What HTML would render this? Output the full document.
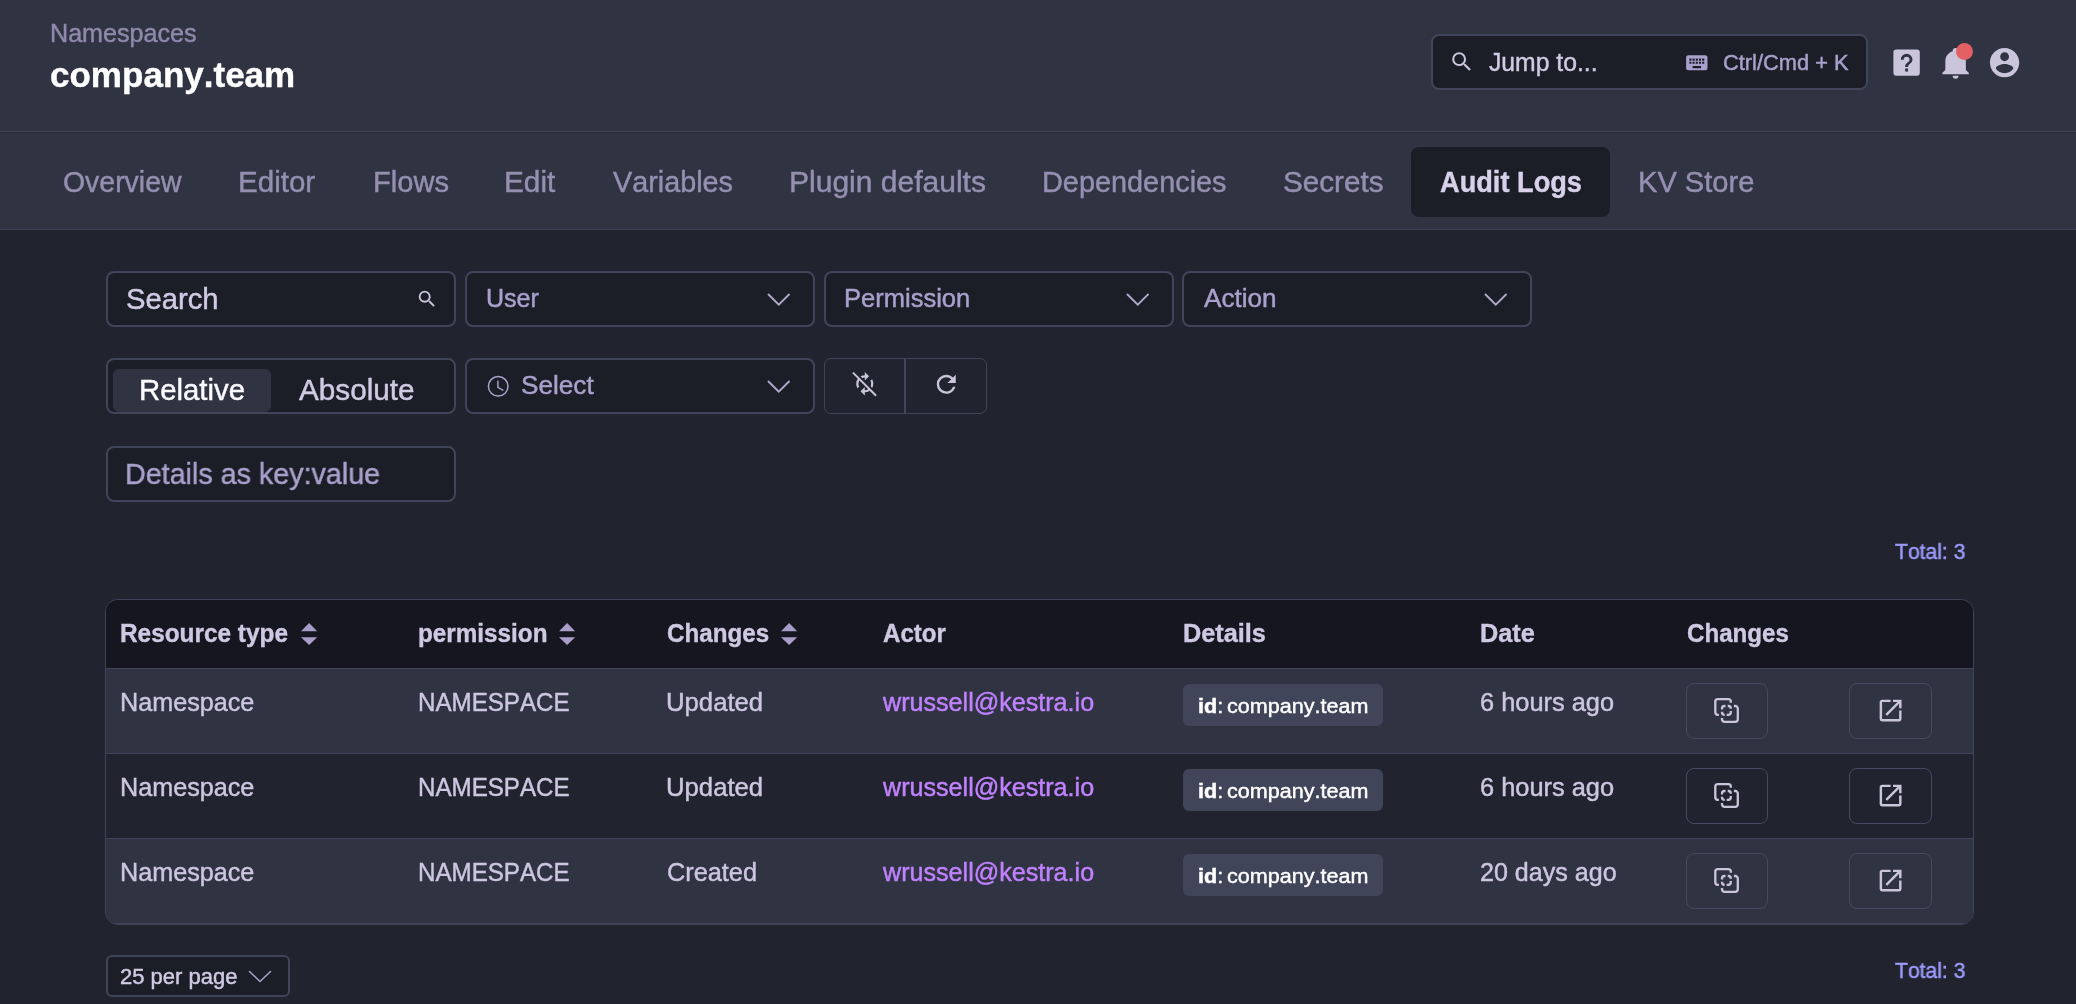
<!DOCTYPE html>
<html lang="en">
<head>
<meta charset="utf-8">
<title>Namespaces - company.team - Audit Logs</title>
<style>
html,body{margin:0;padding:0}
body{width:2076px;height:1004px;overflow:hidden;background:#21242e;position:relative;
font-family:"Liberation Sans",sans-serif;font-kerning:none;-webkit-font-smoothing:antialiased}
#app{position:absolute;left:0;top:0;width:2076px;height:1004px;will-change:transform}
header,nav,section,main,footer{display:block;position:static}
body *{box-sizing:content-box}
#app div,span,a,h1,kbd,svg{position:absolute;margin:0;padding:0;line-height:1;white-space:pre;font-weight:400;font-family:inherit;text-decoration:none;transform-origin:0 0;-webkit-text-stroke-color:currentColor}
b{font-weight:700}
svg{overflow:visible;display:block}
</style>
</head>
<body>
<div id="app">
<header>
<div style="left:0px;top:0px;width:2076px;height:131px;background:#2f3342;"></div>
<div class="crumb" style="left:49.74px;top:21.00px;font-size:25.5px;color:#8f89ac;transform:scaleX(0.9849);-webkit-text-stroke-width:0.45px;">Namespaces</div>
<h1 style="left:50.03px;top:58.00px;font-size:34.5px;color:#ffffff;transform:scaleX(1.0151);-webkit-text-stroke-width:0.4px;font-weight:700;">company.team</h1>
<div class="jump" style="left:1431px;top:34px;width:433px;height:52px;background:#1c1e27;border:2px solid #404559;border-radius:8px;"></div>
<svg style="left:1449.4px;top:49.4px;" width="25.6" height="25.6" viewBox="0 0 24 24"><path fill="#cac5da" d="M9.5,3A6.5,6.5 0 0,1 16,9.5C16,11.11 15.41,12.59 14.44,13.73L14.71,14H15.5L20.5,19L19,20.5L14,15.5V14.71L13.73,14.44C12.59,15.41 11.11,16 9.5,16A6.5,6.5 0 0,1 3,9.5A6.5,6.5 0 0,1 9.5,3M9.5,5C7,5 5,7 5,9.5C5,12 7,14 9.5,14C12,14 14,12 14,9.5C14,7 12,5 9.5,5Z"/></svg>
<span style="left:1488.51px;top:49.00px;font-size:26px;color:#d1cae4;transform:scaleX(0.9508);-webkit-text-stroke-width:0.45px;">Jump to...</span>
<svg style="left:1683.9px;top:49.6px;" width="25.6" height="25.6" viewBox="0 0 24 24"><path fill="#a9a0cc" d="M19,10H17V8H19M19,13H17V11H19M16,10H14V8H16M16,13H14V11H16M16,17H8V15H16M7,10H5V8H7M7,13H5V11H7M8,11H10V13H8M8,8H10V10H8M11,11H13V13H11M11,8H13V10H11M20,5H4C2.89,5 2,5.89 2,7V17A2,2 0 0,0 4,19H20A2,2 0 0,0 22,17V7C22,5.89 21.1,5 20,5Z"/></svg>
<kbd style="left:1722.79px;top:52.00px;font-size:22px;color:#a9a0cc;transform:scaleX(0.9924);-webkit-text-stroke-width:0.45px;">Ctrl/Cmd + K</kbd>
<svg style="left:1888.8px;top:44.85px;" width="35.2" height="35.2" viewBox="0 0 24 24"><path fill="#cac5da" d="M11,18H13V16H11V18M12,6A4,4 0 0,0 8,10H10A2,2 0 0,1 12,8A2,2 0 0,1 14,10C14,12 11,11.75 11,15H13C13,12.75 16,12.5 16,10A4,4 0 0,0 12,6M5,3H19A2,2 0 0,1 21,5V19A2,2 0 0,1 19,21H5A2,2 0 0,1 3,19V5A2,2 0 0,1 5,3Z"/></svg>
<svg style="left:1937.8px;top:44.85px;" width="35.2" height="35.2" viewBox="0 0 24 24"><path fill="#cac5da" d="M21,19V20H3V19L5,17V11C5,7.9 7.03,5.17 10,4.29C10,4.19 10,4.1 10,4A2,2 0 0,1 12,2A2,2 0 0,1 14,4C14,4.1 14,4.19 14,4.29C16.97,5.17 19,7.9 19,11V17L21,19M14,21A2,2 0 0,1 12,23A2,2 0 0,1 10,21"/></svg>
<div class="dot" style="left:1956.2px;top:43px;width:17px;height:17px;background:#e36065;border-radius:9px;"></div>
<svg style="left:1986.8px;top:44.85px;" width="35.2" height="35.2" viewBox="0 0 24 24"><path fill="#cac5da" d="M12,19.2C9.5,19.2 7.29,17.92 6,16C6.03,14 10,12.9 12,12.9C14,12.9 17.97,14 18,16C16.71,17.92 14.5,19.2 12,19.2M12,5A3,3 0 0,1 15,8A3,3 0 0,1 12,11A3,3 0 0,1 9,8A3,3 0 0,1 12,5M12,2A10,10 0 0,0 2,12A10,10 0 0,0 12,22A10,10 0 0,0 22,12C22,6.47 17.5,2 12,2Z"/></svg>
</header>
<nav>
<div style="left:0px;top:131px;width:2076px;height:1px;background:#404559;"></div>
<div style="left:0px;top:132px;width:2076px;height:1px;background:#272a37;"></div>
<div style="left:0px;top:133px;width:2076px;height:96px;background:#2f3342;"></div>
<div style="left:0px;top:229px;width:2076px;height:1px;background:#3a3e52;"></div>
<div class="active" style="left:1411px;top:147px;width:199px;height:69.5px;background:#1c1e27;border-radius:8px;"></div>
<a style="left:62.55px;top:167.00px;font-size:30px;color:#958fb1;transform:scaleX(0.9476);-webkit-text-stroke-width:0.45px;">Overview</a>
<a style="left:238.48px;top:167.00px;font-size:30px;color:#958fb1;transform:scaleX(0.9853);-webkit-text-stroke-width:0.45px;">Editor</a>
<a style="left:372.51px;top:167.00px;font-size:30px;color:#958fb1;transform:scaleX(0.9693);-webkit-text-stroke-width:0.45px;">Flows</a>
<a style="left:503.96px;top:167.00px;font-size:30px;color:#958fb1;transform:scaleX(0.9916);-webkit-text-stroke-width:0.45px;">Edit</a>
<a style="left:613.47px;top:167.00px;font-size:30px;color:#958fb1;transform:scaleX(0.9592);-webkit-text-stroke-width:0.45px;">Variables</a>
<a style="left:789.04px;top:167.00px;font-size:30px;color:#958fb1;transform:scaleX(1.0007);-webkit-text-stroke-width:0.45px;">Plugin defaults</a>
<a style="left:1041.83px;top:167.00px;font-size:30px;color:#958fb1;transform:scaleX(0.9620);-webkit-text-stroke-width:0.45px;">Dependencies</a>
<a style="left:1282.55px;top:167.00px;font-size:30px;color:#958fb1;transform:scaleX(0.9883);-webkit-text-stroke-width:0.45px;">Secrets</a>
<a style="left:1637.71px;top:167.00px;font-size:30px;color:#958fb1;transform:scaleX(0.9693);-webkit-text-stroke-width:0.45px;">KV Store</a>
<a style="left:1440.22px;top:167.00px;font-size:30px;color:#d8d1ea;transform:scaleX(0.9065);-webkit-text-stroke-width:0.4px;font-weight:700;">Audit Logs</a>
</nav>
<section>
<div class="inp" style="left:106px;top:271px;width:346px;height:52px;background:#1c1e27;border:2px solid #404559;border-radius:8px;"></div>
<span style="left:125.57px;top:284.00px;font-size:30px;color:#d1cae4;transform:scaleX(0.9745);-webkit-text-stroke-width:0.45px;">Search</span>
<svg style="left:415.7px;top:288px;" width="22" height="22" viewBox="0 0 24 24"><path fill="#cac5da" d="M9.5,3A6.5,6.5 0 0,1 16,9.5C16,11.11 15.41,12.59 14.44,13.73L14.71,14H15.5L20.5,19L19,20.5L14,15.5V14.71L13.73,14.44C12.59,15.41 11.11,16 9.5,16A6.5,6.5 0 0,1 3,9.5A6.5,6.5 0 0,1 9.5,3M9.5,5C7,5 5,7 5,9.5C5,12 7,14 9.5,14C12,14 14,12 14,9.5C14,7 12,5 9.5,5Z"/></svg>
<div class="inp" style="left:465px;top:271px;width:346px;height:52px;background:#1c1e27;border:2px solid #404559;border-radius:8px;"></div>
<div class="inp" style="left:824px;top:271px;width:346px;height:52px;background:#1c1e27;border:2px solid #404559;border-radius:8px;"></div>
<div class="inp" style="left:1182px;top:271px;width:346px;height:52px;background:#1c1e27;border:2px solid #404559;border-radius:8px;"></div>
<span style="left:485.77px;top:285.00px;font-size:26px;color:#a9a0cc;transform:scaleX(0.9627);-webkit-text-stroke-width:0.45px;">User</span>
<span style="left:844.11px;top:285.00px;font-size:26px;color:#a9a0cc;transform:scaleX(0.9818);-webkit-text-stroke-width:0.45px;">Permission</span>
<span style="left:1203.85px;top:285.00px;font-size:26px;color:#a9a0cc;transform:scaleX(1.0039);-webkit-text-stroke-width:0.45px;">Action</span>
<svg style="left:765.8px;top:291.6px" width="25.5" height="15.5" viewBox="-2 -2 25.5 15.5"><path d="M0.5,0.5 L10.75,10.7 L21.0,0.5" fill="none" stroke="#b0a8cc" stroke-width="1.9" stroke-linecap="round" stroke-linejoin="miter"/></svg>
<svg style="left:1124.8px;top:291.6px" width="25.5" height="15.5" viewBox="-2 -2 25.5 15.5"><path d="M0.5,0.5 L10.75,10.7 L21.0,0.5" fill="none" stroke="#b0a8cc" stroke-width="1.9" stroke-linecap="round" stroke-linejoin="miter"/></svg>
<svg style="left:1482.8px;top:291.6px" width="25.5" height="15.5" viewBox="-2 -2 25.5 15.5"><path d="M0.5,0.5 L10.75,10.7 L21.0,0.5" fill="none" stroke="#b0a8cc" stroke-width="1.9" stroke-linecap="round" stroke-linejoin="miter"/></svg>
<div class="inp" style="left:106px;top:358px;width:346px;height:52px;background:#1c1e27;border:2px solid #404559;border-radius:8px;"></div>
<div class="pill" style="left:113px;top:369px;width:158px;height:42.5px;background:#2f3342;border-radius:6px;"></div>
<span style="left:138.69px;top:375.00px;font-size:30px;color:#fbfaff;transform:scaleX(0.9781);-webkit-text-stroke-width:0.45px;">Relative</span>
<span style="left:298.84px;top:375.00px;font-size:30px;color:#d1cae4;transform:scaleX(0.9900);-webkit-text-stroke-width:0.45px;">Absolute</span>
<div class="inp" style="left:465px;top:358px;width:346px;height:52px;background:#1c1e27;border:2px solid #404559;border-radius:8px;"></div>
<svg style="left:486px;top:374px" width="25" height="25" viewBox="486 374 25 25" fill="none" stroke="#a9a0cc" stroke-width="1.5" stroke-linecap="round"><circle cx="498.2" cy="386.3" r="9.8"/><path d="M497.9 381.2V387.4L502.8 390.1"/></svg>
<span style="left:520.71px;top:372.00px;font-size:26px;color:#a9a0cc;transform:scaleX(1.0058);-webkit-text-stroke-width:0.45px;">Select</span>
<svg style="left:765.8px;top:378.6px" width="25.5" height="15.5" viewBox="-2 -2 25.5 15.5"><path d="M0.5,0.5 L10.75,10.7 L21.0,0.5" fill="none" stroke="#b0a8cc" stroke-width="1.9" stroke-linecap="round" stroke-linejoin="miter"/></svg>
<div class="grp" style="left:824px;top:358px;width:161px;height:54px;border:1px solid #404559;border-radius:7px;"></div>
<div style="left:904px;top:358px;width:2px;height:56px;background:#404559;"></div>
<svg style="left:852.2px;top:370.8px" width="25.6" height="25.6" viewBox="0 0 24 24"><path fill="#cac5da" d="M12,6V9L16,5L12,1V4A8,8 0 0,0 4,12C4,13.57 4.46,15.03 5.24,16.26L6.7,14.8C6.25,13.97 6,13 6,12A6,6 0 0,1 12,6M18.76,7.74L17.3,9.2C17.74,10.04 18,11 18,12A6,6 0 0,1 12,18V15L8,19L12,23V20A8,8 0 0,0 20,12C20,10.43 19.54,8.97 18.76,7.74Z"/><path d="M2.1,0.9L23.2,22" stroke="#21242e" stroke-width="2.6" fill="none"/><path d="M0.9,1.5L22.6,23.2" stroke="#cac5da" stroke-width="1.9" fill="none"/></svg>
<svg style="left:932px;top:369.8px;" width="28.5" height="28.5" viewBox="0 0 24 24"><path fill="#cac5da" d="M17.65,6.35C16.2,4.9 14.21,4 12,4A8,8 0 0,0 4,12A8,8 0 0,0 12,20C15.73,20 18.84,17.45 19.73,14H17.65C16.83,16.33 14.61,18 12,18A6,6 0 0,1 6,12A6,6 0 0,1 12,6C13.66,6 15.14,6.69 16.22,7.78L13,11H20V4L17.65,6.35Z"/></svg>
<div class="inp" style="left:106px;top:446px;width:346px;height:52px;background:#1c1e27;border:2px solid #404559;border-radius:8px;"></div>
<span style="left:124.85px;top:459.00px;font-size:30px;color:#a9a0cc;transform:scaleX(0.9563);-webkit-text-stroke-width:0.45px;">Details as key:value</span>
<span class="total" style="left:1895.13px;top:542.00px;font-size:21.5px;color:#9f9cff;transform:scaleX(0.9819);-webkit-text-stroke-width:0.45px;">Total: 3</span>
</section>
<main>
<div class="tbl" style="left:105px;top:599px;width:1867px;height:324px;border:1px solid #3f4459;border-radius:13px;overflow:hidden;background:#21242e">
<div style="left:0px;top:0px;width:1867px;height:68px;background:#15161f;"></div>
<div style="left:0px;top:68px;width:1867px;height:1px;background:#404559;"></div>
<div style="left:0px;top:69px;width:1867px;height:84px;background:#2f3342;"></div>
<div style="left:0px;top:153px;width:1867px;height:1px;background:#404559;"></div>
<div style="left:0px;top:238px;width:1867px;height:1px;background:#404559;"></div>
<div style="left:0px;top:239px;width:1867px;height:84px;background:#2f3342;"></div>
<div style="left:0px;top:323px;width:1867px;height:1px;background:#404559;"></div>
</div>
<span style="left:120.27px;top:620.00px;font-size:26px;color:#cfc8e2;transform:scaleX(0.9374);-webkit-text-stroke-width:0.4px;font-weight:700;">Resource type</span>
<svg style="left:300.8px;top:622.8px" width="17" height="23" viewBox="0 0 17 23"><path fill="#a79dc8" d="M8.1,0 L16.2,8.2 H0 Z M8.1,22.1 L16.2,14.2 H0 Z"/></svg>
<span style="left:417.70px;top:620.00px;font-size:26px;color:#cfc8e2;transform:scaleX(0.9336);-webkit-text-stroke-width:0.4px;font-weight:700;">permission</span>
<svg style="left:558.7px;top:622.8px" width="17" height="23" viewBox="0 0 17 23"><path fill="#a79dc8" d="M8.1,0 L16.2,8.2 H0 Z M8.1,22.1 L16.2,14.2 H0 Z"/></svg>
<span style="left:666.71px;top:620.00px;font-size:26px;color:#cfc8e2;transform:scaleX(0.9297);-webkit-text-stroke-width:0.4px;font-weight:700;">Changes</span>
<svg style="left:780.6px;top:622.8px" width="17" height="23" viewBox="0 0 17 23"><path fill="#a79dc8" d="M8.1,0 L16.2,8.2 H0 Z M8.1,22.1 L16.2,14.2 H0 Z"/></svg>
<span style="left:882.70px;top:620.00px;font-size:26px;color:#cfc8e2;transform:scaleX(0.9259);-webkit-text-stroke-width:0.4px;font-weight:700;">Actor</span>
<span style="left:1182.51px;top:620.00px;font-size:26px;color:#cfc8e2;transform:scaleX(0.9726);-webkit-text-stroke-width:0.4px;font-weight:700;">Details</span>
<span style="left:1480.21px;top:620.00px;font-size:26px;color:#cfc8e2;transform:scaleX(0.9734);-webkit-text-stroke-width:0.4px;font-weight:700;">Date</span>
<span style="left:1686.51px;top:620.00px;font-size:26px;color:#cfc8e2;transform:scaleX(0.9278);-webkit-text-stroke-width:0.4px;font-weight:700;">Changes</span>
<span style="left:119.83px;top:689.00px;font-size:26px;color:#cdc6e0;transform:scaleX(0.9686);-webkit-text-stroke-width:0.45px;">Namespace</span>
<span style="left:417.82px;top:689.00px;font-size:26px;color:#cdc6e0;transform:scaleX(0.9287);-webkit-text-stroke-width:0.45px;">NAMESPACE</span>
<span style="left:666.32px;top:689.00px;font-size:26px;color:#cdc6e0;transform:scaleX(0.9882);-webkit-text-stroke-width:0.45px;">Updated</span>
<a style="left:883.34px;top:689.00px;font-size:26px;color:#c182ff;transform:scaleX(0.9659);-webkit-text-stroke-width:0.45px;">wrussell@kestra.io</a>
<div class="tag" style="left:1183px;top:684px;width:200px;height:42px;background:#404559;border-radius:6px;"></div>
<span style="left:1197.70px;top:696.00px;font-size:20.5px;color:#ffffff;transform:scaleX(1.0510);-webkit-text-stroke-width:0.45px;word-spacing:-2px;"><b>id</b>: company.team</span>
<span style="left:1480.31px;top:689.00px;font-size:26px;color:#cdc6e0;transform:scaleX(0.9762);-webkit-text-stroke-width:0.45px;">6 hours ago</span>
<div class="btn" style="left:1686px;top:683px;width:80px;height:54px;border:1px solid #454a61;border-radius:8px;"></div>
<div class="btn" style="left:1849px;top:683px;width:81px;height:54px;border:1px solid #454a61;border-radius:8px;"></div>
<svg style="left:1706px;top:690px" width="40" height="40" viewBox="0 0 40 40" fill="none" stroke="#cac5da" stroke-width="2.3"><path d="M24.8 12.7V11.6A2.5 2.5 0 0 0 22.3 9.1H11.8A2.5 2.5 0 0 0 9.3 11.6V22.3A2.5 2.5 0 0 0 11.8 24.8H12.9"/><path d="M27.9 16H29.3A2.5 2.5 0 0 1 31.8 18.5V29.3A2.5 2.5 0 0 1 29.3 31.8H18.5A2.5 2.5 0 0 1 16 29.3V27.9"/><path d="M16 19.5V18.5A2.5 2.5 0 0 1 18.5 16H19.5M21.7 16H22.3A2.5 2.5 0 0 1 24.8 18.5V18.7M16 21.7V22.3A2.5 2.5 0 0 0 18.5 24.8H18.7M24.8 21.1V22.3A2.5 2.5 0 0 1 22.3 24.8H20.7"/></svg>
<svg style="left:1876px;top:696.2px;" width="29.2" height="29.2" viewBox="0 0 24 24"><path fill="#cac5da" d="M14,3V5H17.59L7.76,14.83L9.17,16.24L19,6.41V10H21V3M19,19H5V5H12V3H5C3.89,3 3,3.9 3,5V19A2,2 0 0,0 5,21H19A2,2 0 0,0 21,19V12H19V19Z"/></svg>
<span style="left:119.83px;top:774.00px;font-size:26px;color:#cdc6e0;transform:scaleX(0.9686);-webkit-text-stroke-width:0.45px;">Namespace</span>
<span style="left:417.82px;top:774.00px;font-size:26px;color:#cdc6e0;transform:scaleX(0.9287);-webkit-text-stroke-width:0.45px;">NAMESPACE</span>
<span style="left:666.32px;top:774.00px;font-size:26px;color:#cdc6e0;transform:scaleX(0.9882);-webkit-text-stroke-width:0.45px;">Updated</span>
<a style="left:883.34px;top:774.00px;font-size:26px;color:#c182ff;transform:scaleX(0.9659);-webkit-text-stroke-width:0.45px;">wrussell@kestra.io</a>
<div class="tag" style="left:1183px;top:769px;width:200px;height:42px;background:#404559;border-radius:6px;"></div>
<span style="left:1197.70px;top:781.00px;font-size:20.5px;color:#ffffff;transform:scaleX(1.0510);-webkit-text-stroke-width:0.45px;word-spacing:-2px;"><b>id</b>: company.team</span>
<span style="left:1480.31px;top:774.00px;font-size:26px;color:#cdc6e0;transform:scaleX(0.9762);-webkit-text-stroke-width:0.45px;">6 hours ago</span>
<div class="btn" style="left:1686px;top:768px;width:80px;height:54px;border:1px solid #454a61;border-radius:8px;"></div>
<div class="btn" style="left:1849px;top:768px;width:81px;height:54px;border:1px solid #454a61;border-radius:8px;"></div>
<svg style="left:1706px;top:775px" width="40" height="40" viewBox="0 0 40 40" fill="none" stroke="#cac5da" stroke-width="2.3"><path d="M24.8 12.7V11.6A2.5 2.5 0 0 0 22.3 9.1H11.8A2.5 2.5 0 0 0 9.3 11.6V22.3A2.5 2.5 0 0 0 11.8 24.8H12.9"/><path d="M27.9 16H29.3A2.5 2.5 0 0 1 31.8 18.5V29.3A2.5 2.5 0 0 1 29.3 31.8H18.5A2.5 2.5 0 0 1 16 29.3V27.9"/><path d="M16 19.5V18.5A2.5 2.5 0 0 1 18.5 16H19.5M21.7 16H22.3A2.5 2.5 0 0 1 24.8 18.5V18.7M16 21.7V22.3A2.5 2.5 0 0 0 18.5 24.8H18.7M24.8 21.1V22.3A2.5 2.5 0 0 1 22.3 24.8H20.7"/></svg>
<svg style="left:1876px;top:781.2px;" width="29.2" height="29.2" viewBox="0 0 24 24"><path fill="#cac5da" d="M14,3V5H17.59L7.76,14.83L9.17,16.24L19,6.41V10H21V3M19,19H5V5H12V3H5C3.89,3 3,3.9 3,5V19A2,2 0 0,0 5,21H19A2,2 0 0,0 21,19V12H19V19Z"/></svg>
<span style="left:119.83px;top:859.00px;font-size:26px;color:#cdc6e0;transform:scaleX(0.9686);-webkit-text-stroke-width:0.45px;">Namespace</span>
<span style="left:417.82px;top:859.00px;font-size:26px;color:#cdc6e0;transform:scaleX(0.9287);-webkit-text-stroke-width:0.45px;">NAMESPACE</span>
<span style="left:667.02px;top:859.00px;font-size:26px;color:#cdc6e0;transform:scaleX(0.9732);-webkit-text-stroke-width:0.45px;">Created</span>
<a style="left:883.34px;top:859.00px;font-size:26px;color:#c182ff;transform:scaleX(0.9659);-webkit-text-stroke-width:0.45px;">wrussell@kestra.io</a>
<div class="tag" style="left:1183px;top:854px;width:200px;height:42px;background:#404559;border-radius:6px;"></div>
<span style="left:1197.70px;top:866.00px;font-size:20.5px;color:#ffffff;transform:scaleX(1.0510);-webkit-text-stroke-width:0.45px;word-spacing:-2px;"><b>id</b>: company.team</span>
<span style="left:1480.34px;top:859.00px;font-size:26px;color:#cdc6e0;transform:scaleX(0.9643);-webkit-text-stroke-width:0.45px;">20 days ago</span>
<div class="btn" style="left:1686px;top:853px;width:80px;height:54px;border:1px solid #454a61;border-radius:8px;"></div>
<div class="btn" style="left:1849px;top:853px;width:81px;height:54px;border:1px solid #454a61;border-radius:8px;"></div>
<svg style="left:1706px;top:860px" width="40" height="40" viewBox="0 0 40 40" fill="none" stroke="#cac5da" stroke-width="2.3"><path d="M24.8 12.7V11.6A2.5 2.5 0 0 0 22.3 9.1H11.8A2.5 2.5 0 0 0 9.3 11.6V22.3A2.5 2.5 0 0 0 11.8 24.8H12.9"/><path d="M27.9 16H29.3A2.5 2.5 0 0 1 31.8 18.5V29.3A2.5 2.5 0 0 1 29.3 31.8H18.5A2.5 2.5 0 0 1 16 29.3V27.9"/><path d="M16 19.5V18.5A2.5 2.5 0 0 1 18.5 16H19.5M21.7 16H22.3A2.5 2.5 0 0 1 24.8 18.5V18.7M16 21.7V22.3A2.5 2.5 0 0 0 18.5 24.8H18.7M24.8 21.1V22.3A2.5 2.5 0 0 1 22.3 24.8H20.7"/></svg>
<svg style="left:1876px;top:866.2px;" width="29.2" height="29.2" viewBox="0 0 24 24"><path fill="#cac5da" d="M14,3V5H17.59L7.76,14.83L9.17,16.24L19,6.41V10H21V3M19,19H5V5H12V3H5C3.89,3 3,3.9 3,5V19A2,2 0 0,0 5,21H19A2,2 0 0,0 21,19V12H19V19Z"/></svg>
</main>
<footer>
<div class="pp" style="left:106px;top:955px;width:180px;height:38px;background:#1c1e27;border:2px solid #404559;border-radius:6px;"></div>
<span style="left:119.99px;top:966.00px;font-size:22px;color:#d1cae4;transform:scaleX(0.9996);-webkit-text-stroke-width:0.45px;">25 per page</span>
<svg style="left:247.3px;top:969.2px" width="26" height="15.3" viewBox="-2 -2 26 15.3"><path d="M0.5,0.5 L11.0,10.5 L21.5,0.5" fill="none" stroke="#a89fcb" stroke-width="1.6" stroke-linecap="round" stroke-linejoin="miter"/></svg>
<span class="total" style="left:1895.13px;top:961.00px;font-size:21.5px;color:#9f9cff;transform:scaleX(0.9819);-webkit-text-stroke-width:0.45px;">Total: 3</span>
</footer>
</div>
</body>
</html>
